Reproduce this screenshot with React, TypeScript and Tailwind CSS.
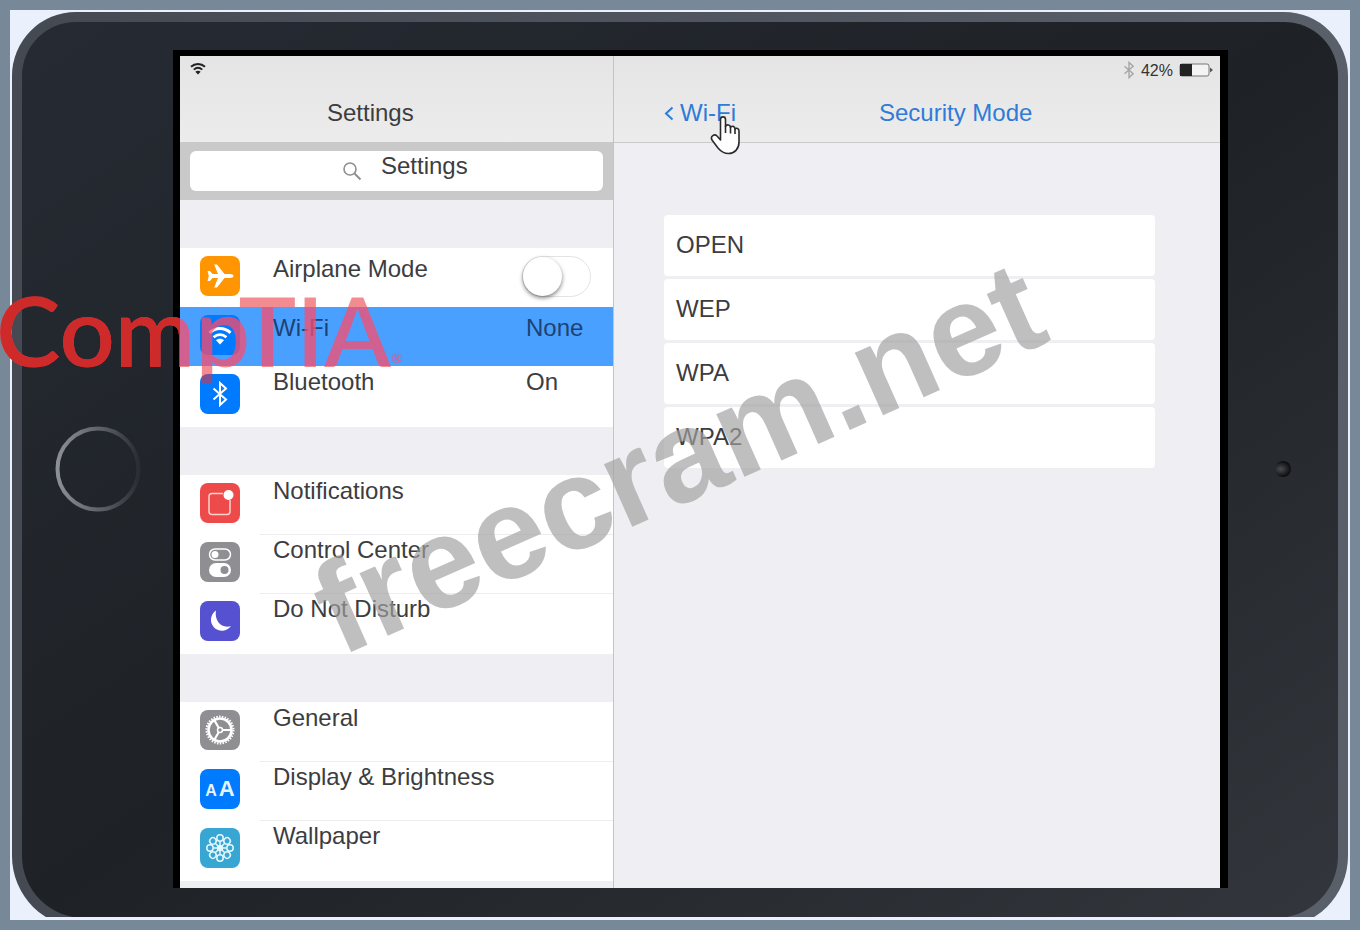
import React from "react";

const AirplaneGlyph = () => (
  <svg viewBox="0 0 40 40" className="size-10" fill="#fff" aria-hidden="true">
    <path d="M33.5 20C33.5 21.2 32 22 30 22H24.5L17 31.5H14.2L18 22H12.5L10 25H7.5L8.800 20L7.500 15H10L12.500 18H18L14.200 8.500H17L24.500 18H30C32 18 33.500 18.800 33.500 20Z" />
  </svg>
);

const WifiGlyph = ({ className }: { className?: string }) => (
  <svg viewBox="0 0 24 19" className={className} fill="none" stroke="currentColor" aria-hidden="true">
    <path d="M1.5 6.8C7.5 1.2 16.5 1.2 22.5 6.8" strokeWidth="3" />
    <path d="M5.6 11.2C9.4 7.8 14.6 7.8 18.4 11.2" strokeWidth="2.8" />
    <path d="M12 18.5L8 14.2C10.3 12.2 13.7 12.2 16 14.2Z" fill="currentColor" stroke="none" />
  </svg>
);

const BluetoothGlyph = ({ className }: { className?: string }) => (
  <svg viewBox="0 0 16 26" className={className} fill="none" stroke="currentColor" strokeWidth="2" aria-hidden="true">
    <path d="M1.5 7.5L14 18.5L8 24V2L14 7.5L1.5 18.5" />
  </svg>
);

const NotificationGlyph = () => (
  <svg viewBox="0 0 40 40" className="size-10" fill="none" aria-hidden="true">
    <path d="M23 10.5H12Q9 10.5 9 13.5V28.5Q9 31.5 12 31.5H27Q30 31.5 30 28.5V17" stroke="#ffd3cd" strokeWidth="1.5" />
    <circle cx="28.5" cy="12" r="5" fill="#fff" />
  </svg>
);

const ControlGlyph = () => (
  <svg viewBox="0 0 40 40" className="size-10" fill="none" aria-hidden="true">
    <rect x="9.5" y="7" width="21" height="11" rx="5.5" stroke="#fff" strokeWidth="1.5" />
    <circle cx="15" cy="12.5" r="3.5" fill="#fff" />
    <rect x="9" y="21" width="22" height="14" rx="7" fill="#fff" />
    <circle cx="24.5" cy="28" r="4" fill="#8e8e93" />
  </svg>
);

const MoonGlyph = () => (
  <svg viewBox="0 0 40 40" className="size-10" fill="#fff" aria-hidden="true">
    <path d="M16 9.5A11 11 0 1 0 31 25C22 28 14 20 16 9.5Z" />
  </svg>
);

const GearGlyph = () => (
  <svg viewBox="0 0 40 40" className="size-10" fill="none" stroke="#fff" aria-hidden="true">
    <circle cx="20" cy="20" r="13.5" strokeWidth="2" strokeDasharray="1.5 1.33" />
    <circle cx="20" cy="20" r="11.5" strokeWidth="2.6" />
    <circle cx="20" cy="20" r="2.5" strokeWidth="1.5" />
    <path d="M22.5 20H31M18.7 17.8L14.5 10.5M18.7 22.2L14.5 29.5" strokeWidth="2.2" />
  </svg>
);

const LettersGlyph = () => (
  <span className="flex items-baseline justify-center gap-0.5 font-bold text-[#e6f4ff]">
    <span className="text-base">A</span>
    <span className="text-[22px]">A</span>
  </span>
);

const FlowerGlyph = () => (
  <svg viewBox="0 0 40 40" className="size-10" fill="none" stroke="#e4f7fd" strokeWidth="1.5" aria-hidden="true">
    {[0, 45, 90, 135, 180, 225, 270, 315].map((a) => (
      <g key={a} transform={`rotate(${a} 20 20)`}>
        <circle cx="20" cy="10" r="3.2" />
        <path d="M20 13.2V18" />
      </g>
    ))}
    <circle cx="20" cy="20" r="3.2" fill="#e4f7fd" stroke="none" />
  </svg>
);

const SearchGlyph = ({ className }: { className?: string }) => (
  <svg viewBox="0 0 20 20" className={className} fill="none" stroke="currentColor" strokeWidth="1.6" aria-hidden="true">
    <circle cx="8" cy="8" r="6" />
    <path d="M12.5 12.5L18.5 18.5" strokeWidth="2" />
  </svg>
);

type RowProps = {
  label: string;
  color: string;
  icon: React.ReactNode;
  value?: string;
  selected?: boolean;
  low?: boolean;
  divider?: boolean;
};

const rowGrid = "grid h-[59px] w-full grid-cols-[40px_1fr_87px] pl-5 text-left";

const IconTile = ({ color, children }: { color: string; children: React.ReactNode }) => (
  <span className={`mt-2 flex size-10 items-center justify-center rounded-lg text-white ${color}`}>
    {children}
  </span>
);

const Row = ({ label, color, icon, value, selected, low, divider }: RowProps) => (
  <li className="relative">
    {divider && <span className="absolute top-0 right-0 left-20 h-px bg-[#ededf0]" />}
    <button type="button" className={`${rowGrid} ${selected ? "bg-[#4aa0ff] text-[#1d4273]" : ""}`}>
      <IconTile color={color}>{icon}</IconTile>
      <span className={`pl-[33px] whitespace-nowrap ${low ? "pt-[5px]" : ""}`}>{label}</span>
      <span className={low ? "pt-[5px]" : ""}>{value}</span>
    </button>
  </li>
);

const Group = ({ children }: { children: React.ReactNode }) => (
  <ul className="mt-12 bg-white pb-0.5">{children}</ul>
);

const Sidebar = () => (
  <aside className="w-[434px] shrink-0 border-r border-[#c4c4c8] pb-[7px]">
    <header className="h-[86px] bg-linear-to-b from-[#e5e5e5] to-[#ececec]">
      <div className="flex h-[42px] items-start pt-1.5 pl-2.5 text-[#222]">
        <WifiGlyph className="h-[13px] w-4" />
      </div>
      <h1 className="-mt-px pl-[147px]">Settings</h1>
    </header>
    <div className="bg-[#c9c9c9] px-2.5 py-[9px]">
      <label className="relative block">
        <span className="sr-only">Search settings</span>
        <SearchGlyph className="absolute top-2.5 left-[152px] size-5 text-[#8f8f8f]" />
        <input
          type="text"
          defaultValue="Settings"
          className="block h-10 w-full rounded-md bg-white pr-2 pb-2.5 pl-[191px] outline-none"
        />
      </label>
    </div>

    <Group>
      <li className={rowGrid}>
        <IconTile color="bg-[#ff9500]">
          <AirplaneGlyph />
        </IconTile>
        <label htmlFor="airplane" className="pt-[5px] pl-[33px] whitespace-nowrap">
          Airplane Mode
        </label>
        <input
          id="airplane"
          type="checkbox"
          role="switch"
          className="-ml-1 mt-2 h-[41px] w-[69px] appearance-none rounded-full border border-[#e3e3e3] bg-white before:block before:size-[39px] before:rounded-full before:bg-white before:shadow-[0_2px_4px_rgba(0,0,0,0.5)]"
        />
      </li>
      <Row label="Wi-Fi" value="None" color="bg-[#007aff]" icon={<WifiGlyph className="w-6" />} selected low />
      <Row label="Bluetooth" value="On" color="bg-[#007aff]" icon={<BluetoothGlyph className="h-[26px] w-4" />} />
    </Group>
    <Group>
      <Row label="Notifications" color="bg-[#ee4a4a]" icon={<NotificationGlyph />} />
      <Row label="Control Center" color="bg-[#8e8e93]" icon={<ControlGlyph />} divider />
      <Row label="Do Not Disturb" color="bg-[#5551d0]" icon={<MoonGlyph />} divider />
    </Group>
    <Group>
      <Row label="General" color="bg-[#8e8e93]" icon={<GearGlyph />} />
      <Row label="Display & Brightness" color="bg-[#007aff]" icon={<LettersGlyph />} divider />
      <Row label="Wallpaper" color="bg-[#38a6d2]" icon={<FlowerGlyph />} divider />
    </Group>
  </aside>
);

const Detail = () => (
  <main className="min-w-0 grow">
    <header className="h-[87px] border-b border-[#cacacc] bg-linear-to-b from-[#e5e5e5] to-[#ececec]">
      <div className="flex h-[42px] items-start justify-end gap-1.5 pt-[5px] pr-[7px] text-base/5 text-[#333]">
        <BluetoothGlyph className="h-[18px] w-3 text-[#a5a5a5]" />
        <span>42%</span>
        <svg viewBox="0 0 34 14" className="mt-0.5 h-3.5 w-[34px]" aria-hidden="true">
          <rect x="1" y="1" width="29" height="12" rx="2" fill="#f4f4f4" stroke="#777" />
          <rect x="1" y="1" width="12" height="12" fill="#222" />
          <path d="M31 4.5L34 7L31 9.5Z" fill="#555" />
        </svg>
      </div>
      <div className="-mt-px grid grid-cols-[215px_1fr] pl-[50px] text-[#2f7bd8]">
        <a href="#wifi" className="flex items-center gap-1.5">
          <svg viewBox="0 0 10 16" className="h-4 w-2.5" fill="none" stroke="currentColor" strokeWidth="2" aria-hidden="true">
            <path d="M8.5 2.5L2 8.5L8.5 14.5" />
          </svg>
          Wi-Fi
        </a>
        <h2>Security Mode</h2>
      </div>
    </header>
    <ul className="mt-[72px] mr-[65px] ml-[50px] flex flex-col gap-[3px]">
      {["OPEN", "WEP", "WPA", "WPA2"].map((mode) => (
        <li key={mode}>
          <button type="button" className="h-[61px] w-full rounded-sm bg-white px-3 pb-0.5 text-left">
            {mode}
          </button>
        </li>
      ))}
    </ul>
  </main>
);

const HomeButton = () => (
  <svg viewBox="0 0 86 86" className="size-[86px]" fill="none" aria-hidden="true">
    <defs>
      <linearGradient id="ring" x1="0" x2="1" y1="0" y2="0">
        <stop offset="0" stopColor="#8b8f98" />
        <stop offset="0.6" stopColor="#565a62" />
        <stop offset="1" stopColor="#2a2d34" />
      </linearGradient>
    </defs>
    <circle cx="43" cy="43" r="40.5" stroke="url(#ring)" strokeWidth="4" />
  </svg>
);

const HandCursor = () => (
  <svg viewBox="0 0 30 40" className="absolute top-[115px] left-[710px] h-10 w-[30px]" aria-hidden="true">
    <path
      d="M10.5 22.5V4.5C10.5 1 15.5 1 15.5 4.5V11.5C16.5 9 20.5 9.5 20.5 12.5C21.5 10.5 25 11 25 14C26.5 12.5 29 13.5 29 16V27C29 34 24.5 38.5 18.5 38.5C13 38.5 10.5 36 8 33L2 25C0 21 4.5 18.5 7 21L10.5 25Z"
      fill="#fff"
      stroke="#2b2b2b"
      strokeWidth="1.6"
      strokeLinejoin="round"
    />
    <path d="M15.5 11V18M20.5 12V18.5M25 13.5V19" stroke="#2b2b2b" strokeWidth="1.6" />
  </svg>
);

export default () => {
  return (
    <div className="relative min-h-screen overflow-hidden bg-[#778899] p-2.5 font-['Liberation_Sans',Arial,sans-serif] text-2xl text-[#3d3d3f]">
      <div className="bg-[#eaf1fd] px-0.5 pt-0.5 pb-[3px]">
        <div className="overflow-hidden">
          <div className="-mb-[11px] rounded-t-[64px] rounded-b-[72px] bg-linear-to-r from-[#444952] to-[#5a606a] p-2.5">
            <div className="flex rounded-t-[54px] rounded-b-[62px] bg-linear-to-br from-[#262a33] via-[#1e2226] to-[#33373d] pt-7 pb-[30px]">
              <div className="flex w-[151px] shrink-0 items-center justify-center">
                <HomeButton />
              </div>
              <div className="flex min-w-0 grow border-t-6 border-r-8 border-l-7 border-black bg-[#efeef3]">
                <Sidebar />
                <Detail />
              </div>
              <div className="flex w-[110px] shrink-0 items-center justify-center">
                <span className="size-4 rounded-full bg-radial-[at_35%_50%] from-[#4a4c50] to-[#0c0d0f] to-70%" />
              </div>
            </div>
          </div>
        </div>
      </div>

      <div className="pointer-events-none">
        <HandCursor />
        <div className="absolute top-[281px] -left-1 flex bg-[linear-gradient(90deg,#cf2a2a_184px,transparent_184px),linear-gradient(180deg,rgba(233,45,55,0.55)_26px,rgba(253,75,107,0.75)_26px,rgba(253,75,107,0.75)_85px,rgba(233,45,55,0.55)_85px)] bg-clip-text pb-3 font-['Lato',sans-serif] text-[97px] leading-none font-semibold text-transparent">
          CompTIA
          <span className="pt-[70px] text-sm leading-none">®</span>
        </div>
        <div className="absolute top-[547px] left-[340px] origin-[0px_110px] -rotate-24 text-[130px] leading-none font-bold text-[rgba(160,160,160,0.67)]">
          freecram.net
        </div>
      </div>
    </div>
  );
};
